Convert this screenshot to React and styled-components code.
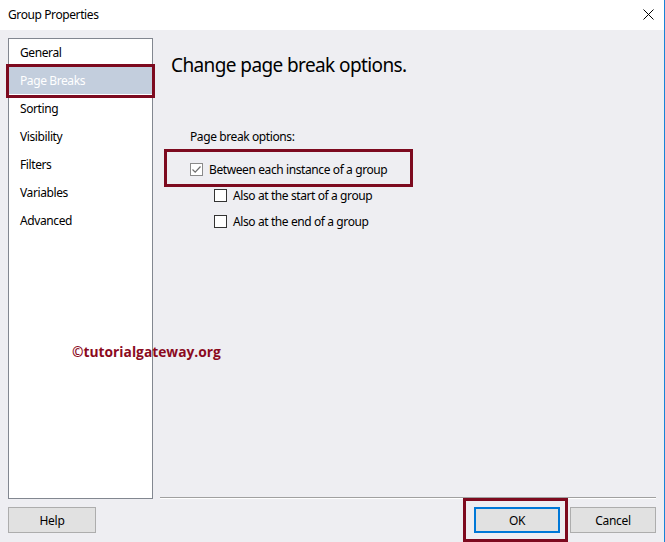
import React from 'react';
import styled, { createGlobalStyle } from 'styled-components';

const GlobalStyle = createGlobalStyle`
  html, body {
    margin: 0;
    padding: 0;
    background: #ffffff;
  }
  * {
    box-sizing: border-box;
  }
`;

const Window = styled.div`
  position: relative;
  width: 665px;
  height: 542px;
  display: flex;
  flex-direction: column;
  border-right: 1px solid #1883d7;
  font-family: "Noto Sans", "Open Sans", sans-serif;
  font-size: 12px;
  letter-spacing: -0.4px;
  color: #000;
  overflow: hidden;
`;

const TitleBar = styled.div`
  height: 30px;
  flex: none;
  display: flex;
  align-items: center;
  justify-content: space-between;
  padding: 0 10px 0 8px;
  background: #ffffff;
`;

const Title = styled.span`
  font-size: 12px;
  margin-top: -1px;
`;

const CloseIcon = styled.svg`
  width: 11px;
  height: 11px;
  margin-top: -2px;
`;

const Body = styled.div`
  flex: 1;
  display: flex;
  flex-direction: column;
  padding: 8px 8px 8px 8px;
  background: #eeeef2;
`;

const MainRow = styled.div`
  display: flex;
  height: 461px;
`;

const NavList = styled.ul`
  list-style: none;
  margin: 0;
  padding: 0;
  width: 145px;
  flex: none;
  background: #ffffff;
  border: 1px solid #828790;
`;

const NavItem = styled.li`
  height: 28px;
  display: flex;
  align-items: center;
  padding-left: 11px;
  margin-top: ${({ first }) => (first ? '-1px' : '0')};
  background: ${({ selected }) => (selected ? '#c3cedd' : 'transparent')};
  color: ${({ selected }) => (selected ? '#ffffff' : '#000000')};
`;

const ContentColumn = styled.div`
  flex: 1;
  display: flex;
  flex-direction: column;
  padding-left: 7px;
`;

const Content = styled.div`
  flex: 1;
  padding: 14px 0 0 11px;
`;

const Heading = styled.h1`
  margin: 0;
  font-size: 19px;
  font-weight: 400;
  letter-spacing: -0.6px;
  line-height: 26px;
`;

const GroupLabel = styled.div`
  margin: 50px 0 0 19px;
  line-height: 18px;
`;

const OptionList = styled.div`
  display: flex;
  flex-direction: column;
  margin-top: 10px;
`;

const OptionRow = styled.label`
  display: flex;
  align-items: center;
  height: 26px;
  padding-left: ${({ indent }) => indent}px;
  gap: 6px;
`;

const Box = styled.span`
  width: 13px;
  height: 13px;
  flex: none;
  display: flex;
  align-items: center;
  justify-content: center;
  background: #ffffff;
  border: 1px solid ${({ checked }) => (checked ? '#8a8a8a' : '#333333')};
`;

const Separator = styled.div`
  height: 2px;
  border-top: 1px solid #a0a0a0;
  border-bottom: 1px solid #ffffff;
`;

const Footer = styled.div`
  display: flex;
  align-items: center;
  margin-top: 8px;
  gap: 10px;
`;

const Button = styled.button`
  width: ${({ wide }) => (wide ? 86 : 88)}px;
  height: 26px;
  padding: 0;
  font-family: inherit;
  font-size: 12px;
  letter-spacing: -0.3px;
  color: #000;
  background: #e1e1e1;
  border: ${({ primary }) => (primary ? '2px solid #0078d7' : '1px solid #adadad')};
  margin-left: ${({ push }) => (push ? 'auto' : '0')};
`;

const Highlight = styled.div`
  position: absolute;
  border: 3px solid #7d0a1f;
  pointer-events: none;
`;

const Watermark = styled.div`
  position: absolute;
  left: 72px;
  top: 342px;
  font-family: "Open Sans", "Noto Sans", sans-serif;
  font-weight: 700;
  font-size: 13.8px;
  letter-spacing: 0;
  color: #8b0a1e;
`;

const navItems = ['General', 'Page Breaks', 'Sorting', 'Visibility', 'Filters', 'Variables', 'Advanced'];

const options = [
  { label: 'Between each instance of a group', checked: true, indent: 8 },
  { label: 'Also at the start of a group', checked: false, indent: 32 },
  { label: 'Also at the end of a group', checked: false, indent: 32 },
];

const Check = () => (
  <svg width="11" height="11" viewBox="0 0 11 11">
    <path d="M1.5 5.5 L4.2 8.2 L9.5 2.5" fill="none" stroke="#6e6e6e" strokeWidth="1.2" />
  </svg>
);

const App = () => (
  <>
    <GlobalStyle />
    <Window>
      <TitleBar>
        <Title>Group Properties</Title>
        <CloseIcon viewBox="0 0 11 11">
          <path d="M0.5 0.5 L10.5 10.5 M10.5 0.5 L0.5 10.5" stroke="#000" strokeWidth="1" />
        </CloseIcon>
      </TitleBar>
      <Body>
        <MainRow>
          <NavList>
            {navItems.map((item, i) => (
              <NavItem key={item} first={i === 0} selected={item === 'Page Breaks'}>
                {item}
              </NavItem>
            ))}
          </NavList>
          <ContentColumn>
            <Content>
              <Heading>Change page break options.</Heading>
              <GroupLabel>Page break options:</GroupLabel>
              <OptionList>
                {options.map((opt) => (
                  <OptionRow key={opt.label} indent={opt.indent + 11}>
                    <Box checked={opt.checked}>{opt.checked && <Check />}</Box>
                    {opt.label}
                  </OptionRow>
                ))}
              </OptionList>
            </Content>
            <Separator />
          </ContentColumn>
        </MainRow>
        <Footer>
          <Button>Help</Button>
          <Button primary push wide>OK</Button>
          <Button wide>Cancel</Button>
        </Footer>
      </Body>
      <Watermark>©tutorialgateway.org</Watermark>
      <Highlight style={{ left: 6, top: 64, width: 149, height: 34 }} />
      <Highlight style={{ left: 164, top: 149, width: 249, height: 38 }} />
      <Highlight style={{ left: 463, top: 498, width: 105, height: 44 }} />
    </Window>
  </>
);

export default App;
